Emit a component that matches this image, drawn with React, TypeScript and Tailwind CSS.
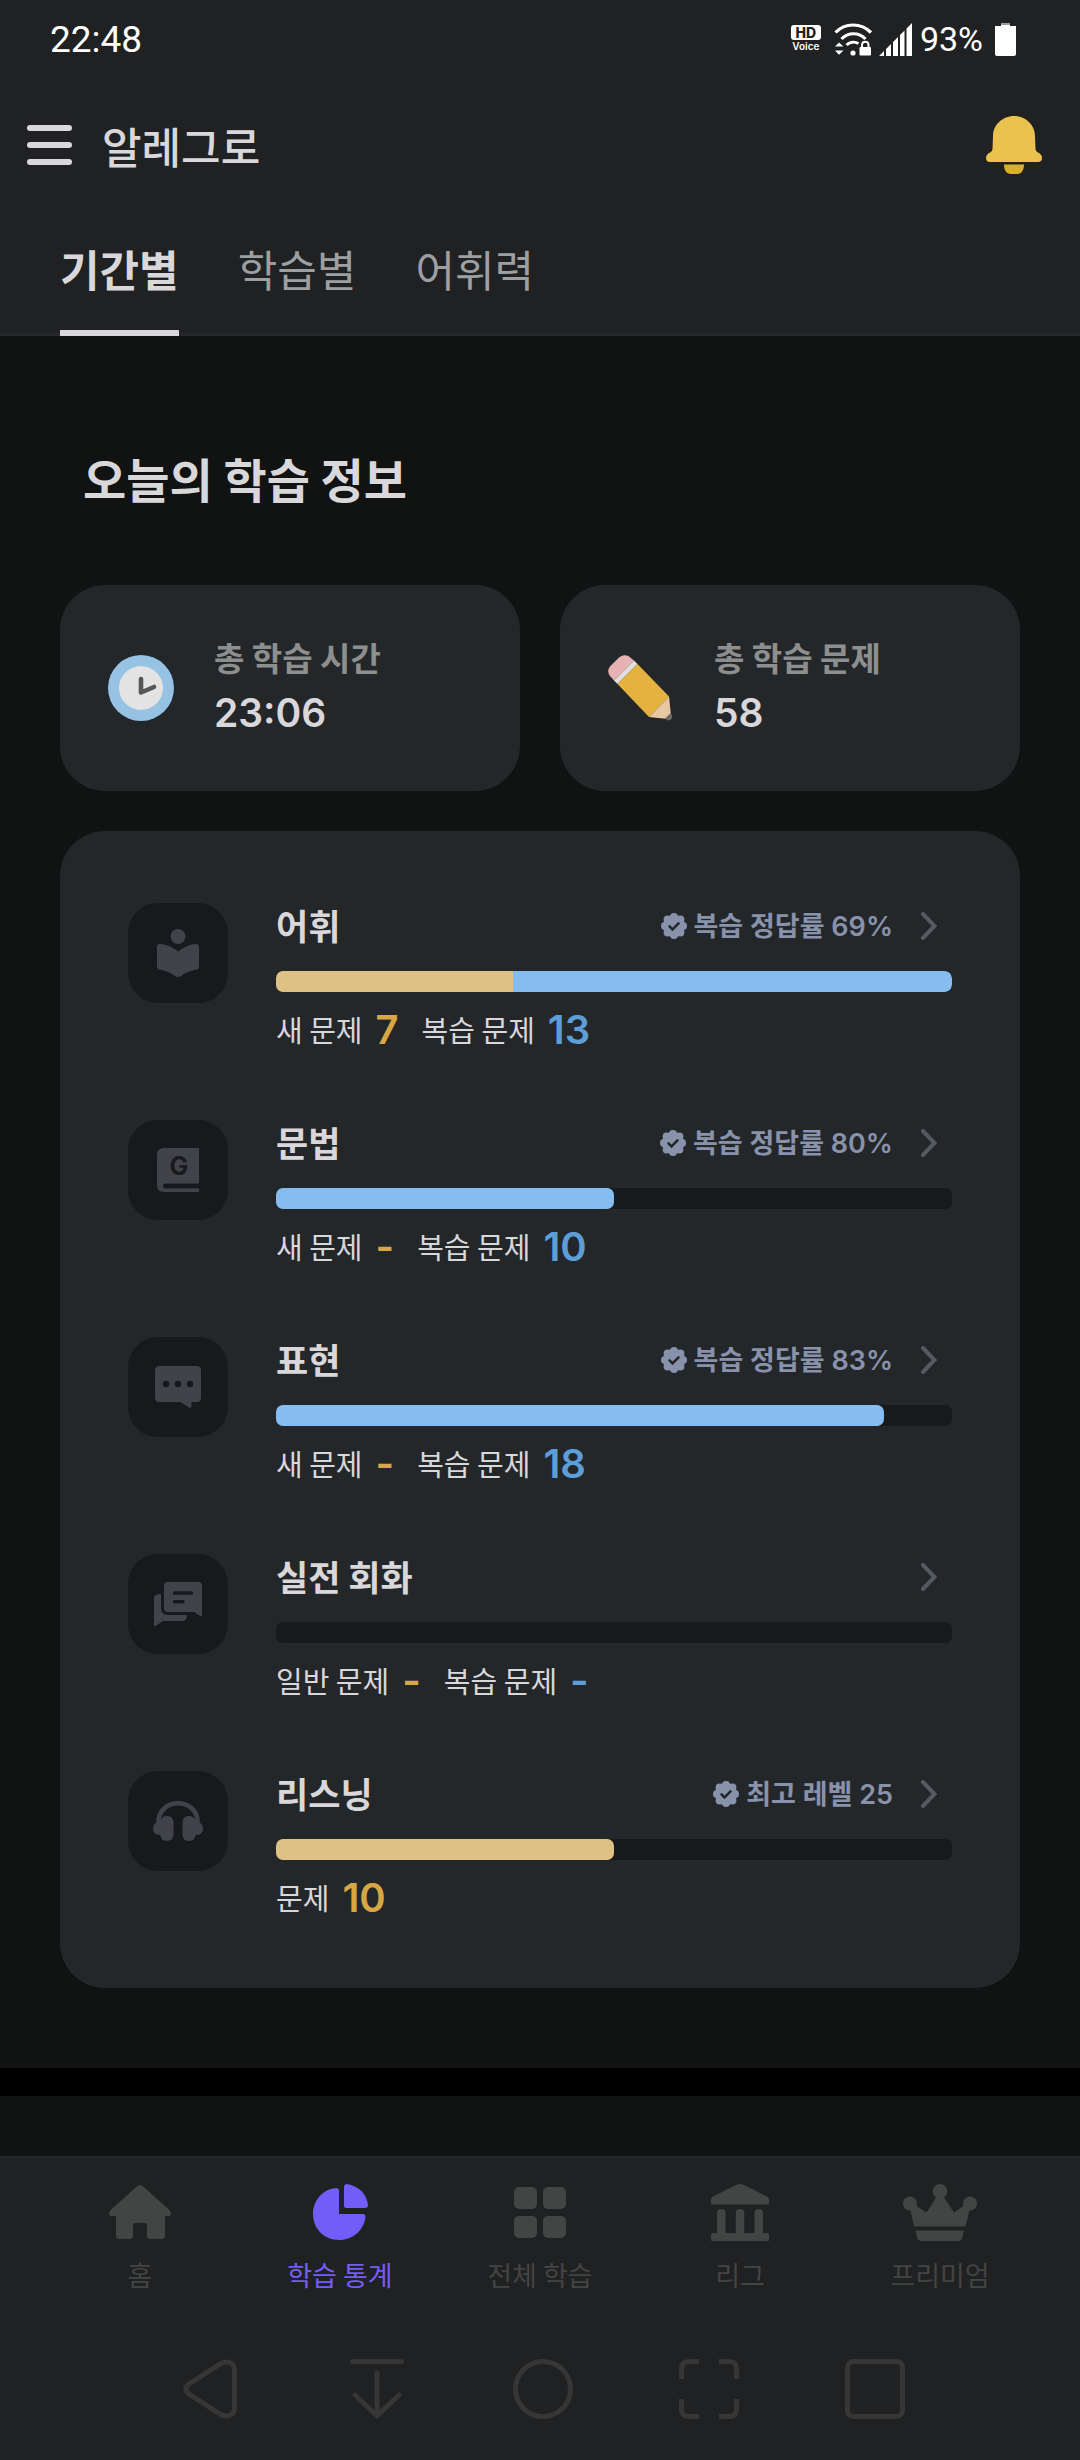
import { useState, type ReactNode } from "react";

const LATIN = "font-['Inter','Noto_Sans_CJK_KR',sans-serif]";

/* ---------- status bar ---------- */

function HdVoiceIcon() {
  return (
    <span className="flex w-[30px] flex-col items-center font-['Inter',sans-serif]" aria-label="HD Voice">
      <span className="w-full rounded-[3px] bg-white text-center text-[14px] font-extrabold leading-[15px] text-[#1f2122]">HD</span>
      <span className="text-[10px] font-semibold leading-[13px] text-white">Voice</span>
    </span>
  );
}

function WifiIcon() {
  return (
    <svg className="h-[33px] w-[39px]" viewBox="0 0 39 33" fill="none" aria-label="Wi-Fi">
      <path d="M1.5 9.5C11-.5 27-.5 37 9.5" stroke="#fff" strokeWidth="3.2" />
      <path d="M7.5 16C14 9 25 9 31.5 16" stroke="#fff" strokeWidth="3.2" />
      <path d="M12.5 22C16 18.5 21 18.5 24.5 20.5" stroke="#fff" strokeWidth="3" />
      <circle cx="19" cy="30" r="2.6" fill="#fff" />
      <path d="M1 23.5 5 19.5 9.5 23.5ZM1 27.5H9.5L5 31.8Z" fill="#fff" />
      <rect x="25.5" y="24" width="11.5" height="8.5" rx="1" fill="#fff" />
      <path d="M28 24.5V22C28 17.5 34.5 17.5 34.5 22V24.5" stroke="#fff" strokeWidth="2" />
    </svg>
  );
}

function SignalIcon() {
  return (
    <svg className="h-[33px] w-[33px]" viewBox="0 0 33 33" fill="#fff" aria-label="Signal">
      <path d="M0 33 5 28V33ZM7 33V26L12 21V33ZM14 33V19L19 14V33ZM21 33V12L25.5 7.5V33ZM27.5 33V5.5L33 0V33Z" />
    </svg>
  );
}

function BatteryIcon() {
  return (
    <svg className="h-[33px] w-[21px]" viewBox="0 0 21 33" aria-label="Battery">
      <rect x="6" y="0" width="9" height="4" fill="#9a9b9b" />
      <path d="M0 3H6V2H15V3H21V31Q21 33 19 33H2Q0 33 0 31Z" fill="#fff" />
    </svg>
  );
}

function StatusBar() {
  return (
    <div className="flex h-[78px] items-center justify-between pr-16 pl-[50px] font-['Roboto',sans-serif] text-white">
      <span className="text-[37px] leading-none">22:48</span>
      <div className="flex items-center">
        <HdVoiceIcon />
        <div className="ml-[13px] flex items-center gap-[6px]">
          <WifiIcon />
          <SignalIcon />
        </div>
        <span className="ml-2 text-[34px] leading-none">93%</span>
        <span className="ml-3">
          <BatteryIcon />
        </span>
      </div>
    </div>
  );
}

/* ---------- header ---------- */

function BellIcon() {
  return (
    <svg className="h-[58px] w-[56px]" viewBox="0 0 56 58" aria-hidden="true">
      <path d="M28 0C39.5 0 49 9 49 20L49.5 33Q49.5 35.5 52 36.5Q56 38.5 56 42Q56 46 52 46H4Q0 46 0 42Q0 38.5 4 36.5Q6.5 35.5 6.5 33L7 20C7 9 16.5 0 28 0Z" fill="#e9c24f" />
      <path d="M18 48.5H38C38 54 35.5 58 31.5 58H24.5C20.5 58 18 54 18 48.5Z" fill="#d9b02d" />
    </svg>
  );
}

function Header() {
  return (
    <header className="flex h-[134px] items-center pr-[38px] pl-[27px]">
      <button type="button" aria-label="메뉴" className="flex w-[45px] flex-col gap-[11px]">
        <span className="h-[6px] rounded-full bg-[#d9d7d9]" />
        <span className="h-[6px] rounded-full bg-[#d9d7d9]" />
        <span className="h-[6px] rounded-full bg-[#d9d7d9]" />
      </button>
      <h1 className="ml-[30px] text-[43px] leading-none font-medium text-[#d9d7d9]">알레그로</h1>
      <button type="button" aria-label="알림" className="ml-auto">
        <BellIcon />
      </button>
    </header>
  );
}

const TABS = ["기간별", "학습별", "어휘력"];

function Tabs() {
  const [active, setActive] = useState(0);
  return (
    <nav className="flex gap-[59px] border-b-3 border-[#26282a] pl-[60px]">
      {TABS.map((tab, i) => (
        <button
          key={tab}
          type="button"
          onClick={() => setActive(i)}
          className={`-mb-[3px] border-b-6 pt-7 pb-[34px] text-[43px] leading-[56px] ${
            i === active ? "border-[#d9d7d9] font-bold text-[#d9d7d9]" : "border-transparent text-[#9d9fa0]"
          }`}
        >
          {tab}
        </button>
      ))}
    </nav>
  );
}

/* ---------- summary ---------- */

function ClockIcon() {
  return (
    <svg className="h-[66px] w-[66px]" viewBox="0 0 66 66" fill="none" aria-hidden="true">
      <circle cx="33" cy="33" r="33" fill="#96c3e4" />
      <circle cx="33" cy="33" r="22" fill="#e3e3e3" />
      <path d="M33 24V37.500L46 32" stroke="#555657" strokeWidth="4.6" strokeLinecap="round" strokeLinejoin="round" />
    </svg>
  );
}

function PencilIcon() {
  return (
    <svg className="h-[66px] w-[66px]" viewBox="0 0 66 66" aria-hidden="true">
      <path d="M6 25.5 2 21Q-1.500 16 2 11.5L11 2.5Q16 -1.5 21 1.5L26 5.5Z" fill="#e7b2b2" />
      <path d="M6 25.5 26 5.5 29.5 9 9.500 29Z" fill="#e0e0e0" />
      <path d="M9.5 29 29.5 9 61 41.5 41 62Z" fill="#e5b23f" />
      <path d="M61 41.5 41 62 57.5 63.8 62.8 58.500Z" fill="#e8c8a2" />
      <path d="M57 63.7 62.8 58Q65 61 63.500 64Q61 67 57 63.7Z" fill="#6a6968" />
    </svg>
  );
}

function SummaryCard({ icon, label, value }: { icon: ReactNode; label: string; value: string }) {
  return (
    <div className="flex h-[206px] flex-1 items-center gap-10 rounded-[45px] bg-[#24272a] pl-12">
      {icon}
      <div className="pb-[6px] leading-[56px]">
        <div className="text-[33px] font-bold text-[#8d8f8e]">{label}</div>
        <div className={`${LATIN} text-[39px] font-semibold text-[#d9d7d9]`}>{value}</div>
      </div>
    </div>
  );
}

/* ---------- subject list ---------- */

function ReaderIcon() {
  return (
    <svg className="h-[48px] w-[42px]" viewBox="0 0 42 48" fill="#42434a" aria-hidden="true">
      <circle cx="21" cy="7.5" r="7.5" />
      <path d="M3 15C10 15.5 16 18.5 21 22.5C26 18.5 32 15.5 39 15Q42 15 42 18V37.5Q42 40.5 39 40.7C34 41.5 28 43.5 24 47Q21 49 18 47C14 43.5 8 41.5 3 40.7Q0 40.5 0 37.5V18Q0 15 3 15Z" />
    </svg>
  );
}

function GrammarIcon() {
  return (
    <svg className="h-[44px] w-[42px]" viewBox="0 0 42 44" aria-hidden="true">
      <path d="M7 0H42V44H7Q0 44 0 37V7Q0 0 7 0Z" fill="#42434a" />
      <path d="M8.5 35.5H42V40.5H8.5Q6 40.5 6 38Q6 35.5 8.5 35.5Z" fill="#18191c" />
      <text x="22" y="27" textAnchor="middle" fontSize="25" fontWeight="700" fontFamily="Inter" fill="#18191c">G</text>
    </svg>
  );
}

function ChatIcon() {
  return (
    <svg className="h-[42px] w-[46px]" viewBox="0 0 46 42" aria-hidden="true">
      <path d="M4.5 0H41.5Q46 0 46 4.5V31.5Q46 36 41.5 36H36.5V40Q36.5 42.5 34 41.5L25.5 36H4.5Q0 36 0 31.5V4.5Q0 0 4.5 0Z" fill="#42434a" />
      <circle cx="11" cy="18" r="3.3" fill="#18191c" />
      <circle cx="23" cy="18" r="3.3" fill="#18191c" />
      <circle cx="35" cy="18" r="3.3" fill="#18191c" />
    </svg>
  );
}

function DialogueIcon() {
  return (
    <svg className="h-[44px] w-[48px]" viewBox="0 0 48 44" aria-hidden="true">
      <path d="M14 0H44Q48 0 48 4V32.5Q48 35 46 34L40 30H14Q10 30 10 26V4Q10 0 14 0Z" fill="#42434a" />
      <path d="M20.500 11H37.500M20.500 19.700H29" stroke="#18191c" strokeWidth="3.600" strokeLinecap="round" />
      <path d="M7 12V26Q7 33 14 33H33Q33 39 28 39H9L2.5 43.5Q0 45 0 42.500V16Q0 12 7 12Z" fill="#42434a" />
    </svg>
  );
}

function HeadphonesIcon() {
  return (
    <svg className="h-[40px] w-[50px]" viewBox="0 0 50 40" aria-hidden="true">
      <path d="M5.5 24V21C5.5 10 14 2.3 25 2.3C36 2.3 44.5 10 44.5 21V24" stroke="#42434a" strokeWidth="4.6" fill="none" />
      <rect x="7.5" y="15" width="13" height="25" rx="6" fill="#42434a" />
      <rect x="29.5" y="15" width="13" height="25" rx="6" fill="#42434a" />
      <rect x="0" y="21" width="12" height="13" rx="6" fill="#42434a" />
      <rect x="38" y="21" width="12" height="13" rx="6" fill="#42434a" />
    </svg>
  );
}

const BUMPS = [
  [13, 4], [19.4, 6.6], [22, 13], [19.4, 19.4], [13, 22], [6.6, 19.4], [4, 13], [6.6, 6.6],
];

function BadgeIcon() {
  return (
    <svg className="h-[26px] w-[26px]" viewBox="0 0 26 26" aria-hidden="true">
      <g fill="#8892aa">
        <circle cx="13" cy="13" r="11" />
        {BUMPS.map(([x, y]) => (
          <circle key={`${x}-${y}`} cx={x} cy={y} r="4" />
        ))}
      </g>
      <path d="M8.5 13.300 11.500 16.300 17.500 10.300" fill="none" stroke="#24272a" strokeWidth="2.6" strokeLinecap="round" />
    </svg>
  );
}

function ChevronIcon() {
  return (
    <svg className="h-[28px] w-[16px]" viewBox="0 0 16 28" aria-hidden="true">
      <path d="M2 2 13.500 14 2 26" fill="none" stroke="#545b60" strokeWidth="4" strokeLinecap="round" />
    </svg>
  );
}

type Count = { label: string; value: string; tone: "new" | "review" };
type Subject = {
  name: string;
  icon: ReactNode;
  badge?: string;
  fresh: number;
  review: number;
  counts: Count[];
};

const GOAL = 20;

const SUBJECTS: Subject[] = [
  {
    name: "어휘",
    icon: <ReaderIcon />,
    badge: "복습 정답률 69%",
    fresh: 7,
    review: 13,
    counts: [
      { label: "새 문제", value: "7", tone: "new" },
      { label: "복습 문제", value: "13", tone: "review" },
    ],
  },
  {
    name: "문법",
    icon: <GrammarIcon />,
    badge: "복습 정답률 80%",
    fresh: 0,
    review: 10,
    counts: [
      { label: "새 문제", value: "-", tone: "new" },
      { label: "복습 문제", value: "10", tone: "review" },
    ],
  },
  {
    name: "표현",
    icon: <ChatIcon />,
    badge: "복습 정답률 83%",
    fresh: 0,
    review: 18,
    counts: [
      { label: "새 문제", value: "-", tone: "new" },
      { label: "복습 문제", value: "18", tone: "review" },
    ],
  },
  {
    name: "실전 회화",
    icon: <DialogueIcon />,
    fresh: 0,
    review: 0,
    counts: [
      { label: "일반 문제", value: "-", tone: "new" },
      { label: "복습 문제", value: "-", tone: "review" },
    ],
  },
  {
    name: "리스닝",
    icon: <HeadphonesIcon />,
    badge: "최고 레벨 25",
    fresh: 10,
    review: 0,
    counts: [{ label: "문제", value: "10", tone: "new" }],
  },
];

function SubjectRow({ subject }: { subject: Subject }) {
  const { name, icon, badge, fresh, review, counts } = subject;
  return (
    <li className="flex gap-12">
      <div className="flex h-[100px] w-[100px] shrink-0 items-center justify-center rounded-[30px] bg-[#18191c]">{icon}</div>
      <div className="min-w-0 flex-1">
        <button type="button" className="flex h-[46px] w-full items-center pr-[15px]">
          <span className="pb-[3px] text-[35px] leading-none font-bold text-[#d9d7d9]">{name}</span>
          <span className="ml-auto flex items-center gap-[7px] text-[#8892aa]">
            {badge && (
              <>
                <BadgeIcon />
                <span className={`${LATIN} text-[27px] leading-none font-semibold`}>{badge}</span>
              </>
            )}
          </span>
          <span className="ml-7">
            <ChevronIcon />
          </span>
        </button>
        <div className="mt-[22px] flex h-[21px] overflow-hidden rounded-[7px] bg-[#18191c]">
          <div className={`bg-[#dfc185] ${review ? "" : "rounded-r-[7px]"}`} style={{ width: `${(fresh / GOAL) * 100}%` }} />
          <div className="rounded-r-[7px] bg-[#85bdf1]" style={{ width: `${(review / GOAL) * 100}%` }} />
        </div>
        <div className="mt-[18px] flex h-[39px] items-center gap-[23px]">
          {counts.map((c) => (
            <span key={c.label} className="flex items-center gap-[13px]">
              <span className="text-[29px] leading-none text-[#d9d7d9]">{c.label}</span>
              <span
                className={`${LATIN} text-[40px] leading-none font-semibold ${
                  c.tone === "new" ? "text-[#d7a744]" : "text-[#5c9fd8]"
                }`}
              >
                {c.value}
              </span>
            </span>
          ))}
        </div>
      </div>
    </li>
  );
}

/* ---------- bottom navigation ---------- */

function HomeIcon() {
  return (
    <svg className="h-[54px] w-[62px]" viewBox="0 0 62 54" fill="currentColor" aria-hidden="true">
      <path d="M28.5 1Q31 -1 33.5 1L60.5 25Q62 26.5 62 28.5Q62 31 59.5 31H56V50.5Q56 54 52.500 54H41.5Q38 54 38 50.5V41Q38 38 35 38H27Q24 38 24 41V50.5Q24 54 20.5 54H10.5Q7 54 7 50.5V31H2.5Q0 31 0 28.5Q0 26.5 1.5 25Z" />
    </svg>
  );
}

function PieIcon() {
  return (
    <svg className="h-[56px] w-[55px]" viewBox="0 0 55 56" fill="currentColor" aria-hidden="true">
      <path d="M26 7Q26 4 23 4C9 5.5 0 17 0 30C0 45 11.5 56 26 56C40 56 51 46 52.5 33Q52.5 30 49.5 30H26Z" />
      <path d="M31 3Q31 0 34 0C46 2 54 10.5 55 21Q55 24 52 24H33Q31 24 31 22Z" />
    </svg>
  );
}

function GridIcon() {
  return (
    <svg className="h-[51px] w-[52px]" viewBox="0 0 52 51" fill="currentColor" aria-hidden="true">
      <rect width="23" height="22" rx="5" />
      <rect x="29" width="23" height="22" rx="5" />
      <rect y="29" width="23" height="22" rx="5" />
      <rect x="29" y="29" width="23" height="22" rx="5" />
    </svg>
  );
}

function LeagueIcon() {
  return (
    <svg className="h-[57px] w-[58px]" viewBox="0 0 58 57" fill="currentColor" aria-hidden="true">
      <path d="M25 1Q29 -1 33 1L56 12.5Q58 13.5 58 15.5V20.5H0V15.5Q0 13.5 2 12.5Z" />
      <path d="M6 50V29Q6 25 10.2 25Q14.5 25 14.5 29V50ZM24.8 50V29Q24.8 25 29 25Q33.3 25 33.3 29V50ZM43.5 50V29Q43.5 25 47.8 25Q52 25 52 29V50Z" />
      <rect y="49" width="58" height="8" rx="1.5" />
    </svg>
  );
}

function CrownIcon() {
  return (
    <svg className="h-[57px] w-[74px]" viewBox="0 0 74 57" fill="currentColor" aria-hidden="true">
      <circle cx="37" cy="7.3" r="7.3" />
      <circle cx="7" cy="19.5" r="7" />
      <circle cx="67" cy="19.5" r="7" />
      <path d="M7 24 12 21 23.5 28.5 34 12H40L51 28.5 62 21 67 24 62.5 42.5H11Z" />
      <path d="M12.5 46.5H61L59.5 53Q58.5 57 55 57H18.5Q15 57 14 53Z" />
    </svg>
  );
}

const NAV = [
  { label: "홈", icon: <HomeIcon />, href: "#home" },
  { label: "학습 통계", icon: <PieIcon />, href: "#stats", active: true },
  { label: "전체 학습", icon: <GridIcon />, href: "#all" },
  { label: "리그", icon: <LeagueIcon />, href: "#league" },
  { label: "프리미엄", icon: <CrownIcon />, href: "#premium" },
];

function BottomNav() {
  return (
    <nav className="grid grid-cols-5 px-10 pt-6">
      {NAV.map((item) => (
        <a
          key={item.label}
          href={item.href}
          className={`flex flex-col items-center ${item.active ? "text-[#745cf8]" : "text-[#434444]"}`}
        >
          <span className="flex h-[60px] items-center">{item.icon}</span>
          <span className="mt-[15px] text-[27px] leading-9">{item.label}</span>
        </a>
      ))}
    </nav>
  );
}

const SYSTEM_KEYS = [
  { label: "뒤로", drawing: <path d="M8 25 40 4.5C46 1 53.5 4 53.5 11V49C53.5 56 46 59 40 55.5L8 35Q1.5 30 8 25Z" /> },
  { label: "알림창", drawing: <path d="M5.5 2.5H54.5M30 14V57M8 36 30 57 52 36" strokeLinecap="round" strokeLinejoin="round" /> },
  { label: "홈 버튼", drawing: <circle cx="30" cy="30" r="27.5" /> },
  {
    label: "캡처",
    drawing: (
      <path d="M20 2.5H10Q2.5 2.5 2.5 10V20M40 2.5H50Q57.5 2.5 57.5 10V20M57.5 40V50Q57.5 57.5 50 57.5H40M20 57.5H10Q2.5 57.5 2.5 50V40" />
    ),
  },
  { label: "최근 앱", drawing: <rect x="2.5" y="2.5" width="55" height="55" rx="6" /> },
];

function SystemBar() {
  return (
    <div className="grid grid-cols-5 pt-[66px] pr-[122px] pb-[41px] pl-32">
      {SYSTEM_KEYS.map((key) => (
        <button key={key.label} type="button" aria-label={key.label} className="flex justify-center">
          <svg className="h-[60px] w-[60px]" viewBox="0 0 60 60" fill="none" stroke="#363636" strokeWidth="5" aria-hidden="true">
            {key.drawing}
          </svg>
        </button>
      ))}
    </div>
  );
}

export default function App() {
  return (
    <div className="flex min-h-screen flex-col bg-[#111212] font-['Noto_Sans_CJK_KR',sans-serif]">
      <div className="bg-[#1f2122]">
        <StatusBar />
        <Header />
        <Tabs />
      </div>
      <main className="flex-1">
        <section className="px-[60px] pt-28 pb-20">
          <h2 className="mb-[77px] pl-[23px] text-[47px] leading-[60px] font-bold text-[#d9d7d9]">오늘의 학습 정보</h2>
          <div className="flex gap-10">
            <SummaryCard icon={<ClockIcon />} label="총 학습 시간" value="23:06" />
            <SummaryCard icon={<PencilIcon />} label="총 학습 문제" value="58" />
          </div>
          <ul className="mt-10 flex flex-col gap-[71px] rounded-[45px] bg-[#24272a] px-[68px] pt-[72px] pb-[71px]">
            {SUBJECTS.map((s) => (
              <SubjectRow key={s.name} subject={s} />
            ))}
          </ul>
        </section>
        <div className="h-7 bg-black" />
      </main>
      <footer className="border-t-2 border-[#23292c] bg-[#1f2122]">
        <BottomNav />
        <SystemBar />
      </footer>
    </div>
  );
}
